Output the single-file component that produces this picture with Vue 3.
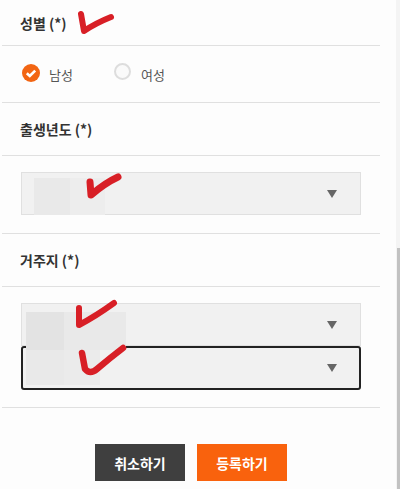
<script setup>
const marks = [
  'M81 14 L84 31 Q96 23 111 17',
  'M90 182 L91 195 Q105 183 118 177',
  'M79 308 L79 325 Q96 316 114 303',
  'M82 353 L85 369 Q90 375 97 369 Q110 358 123 348',
]
const widths = [6, 7, 6, 6.5]
</script>

<template>
  <div class="page">
    <main class="form">
      <section class="head"><h2>성별 (*)</h2></section>
      <section class="radios">
        <label class="radio">
          <svg class="on" width="18" height="18" viewBox="0 0 18 18">
            <circle cx="9" cy="9" r="9" fill="#f26513" />
            <path d="M4.8 9.2 L7.8 12 L13.2 6.6" fill="none" stroke="#fff" stroke-width="2.6" />
          </svg>
          <span>남성</span>
        </label>
        <label class="radio second">
          <span class="off"></span>
          <span>여성</span>
        </label>
      </section>
      <section class="head"><h2>출생년도 (*)</h2></section>
      <section class="fields single">
        <div class="select"><i></i></div>
      </section>
      <section class="head"><h2>거주지 (*)</h2></section>
      <section class="fields double">
        <div class="select"><i></i></div>
        <div class="select focus"><i></i></div>
      </section>
      <footer class="actions">
        <button class="cancel" type="button">취소하기</button>
        <button class="submit" type="button">등록하기</button>
      </footer>
    </main>

    <div class="bar"></div>

    <!-- redaction patches and hand-drawn marks lie over the form -->
    <div class="patch" style="left:34px;top:178px;width:36px;height:37px;background:#e9e9e9"></div>
    <div class="patch" style="left:70px;top:178px;width:35px;height:37px;background:#ededed"></div>
    <div class="patch" style="left:26px;top:312px;width:38px;height:38px;background:#e3e3e3"></div>
    <div class="patch" style="left:64px;top:312px;width:62px;height:38px;background:#e9e9e9"></div>
    <div class="patch" style="left:26px;top:350px;width:38px;height:35px;background:#e9e9e9"></div>
    <div class="patch" style="left:64px;top:350px;width:36px;height:35px;background:#ebebeb"></div>
    <svg class="ink" width="400" height="489" viewBox="0 0 400 489">
      <path v-for="(d, i) in marks" :key="i" :d="d" :stroke-width="widths[i]" fill="none" stroke="#d81f26" stroke-linecap="round" stroke-linejoin="round" />
    </svg>
  </div>
</template>

<style>
html, body { margin: 0; background: #fdfdfd; }
</style>

<style scoped>
.page {
  position: relative;
  width: 400px;
  height: 489px;
  overflow: hidden;
  background: #fdfdfd;
  font-family: "Noto Sans CJK KR", "Noto Sans", sans-serif;
}
.form {
  width: 378px;
  margin-left: 2px;
  display: flex;
  flex-direction: column;
}
section { border-bottom: 1.5px solid #e0e0e0; box-sizing: border-box; }
.head {
  display: flex;
  align-items: center;
  padding-left: 18px;
}
.head h2 {
  margin: 0;
  font-size: 14px;
  font-weight: 700;
  color: #333;
  line-height: 18px;
}
.head:nth-of-type(1) { height: 46px; }
.head:nth-of-type(3) { height: 53px; }
.head:nth-of-type(5) { height: 53px; }
.radios {
  height: 57px;
  display: flex;
  align-items: center;
  padding-left: 20px;
  padding-bottom: 2px;
}
.radio {
  display: flex;
  align-items: center;
  gap: 9px;
  font-size: 13px;
  color: #555;
}
.radio span:last-child { padding-top: 3px; }
.second { margin-left: 41px; gap: 10px; }
.off {
  width: 13px;
  height: 13px;
  border: 2px solid #ddd;
  border-radius: 50%;
  background: #fafafa;
  margin-top: -3px;
}
.fields {
  padding-left: 19px;
  display: flex;
  flex-direction: column;
}
.single { height: 78px; padding-top: 16px; }
.double { height: 121px; padding-top: 16px; }
.select {
  width: 340px;
  height: 43px;
  box-sizing: border-box;
  flex: none;
  background: #f1f1f1;
  border: 1px solid #e0e0e0;
  display: flex;
  align-items: center;
  justify-content: flex-end;
  padding-right: 23px;
}
.select i {
  width: 0;
  height: 0;
  border-left: 5px solid transparent;
  border-right: 5px solid transparent;
  border-top: 8px solid #666;
}
.focus {
  height: 44px;
  border: 2px solid #222;
  border-radius: 3px;
  padding-right: 22px;
}
.actions {
  display: flex;
  justify-content: center;
  gap: 12px;
  padding-top: 36px;
  margin-left: -2px;
  width: 382px;
}
.actions button {
  width: 90px;
  height: 37px;
  border: 0;
  padding: 0;
  color: #fff;
  font: 700 14px "Noto Sans CJK KR", "Noto Sans", sans-serif;
}
.cancel { background: #3f3f3f; }
.submit { background: #f9620d; }
.bar {
  position: absolute;
  top: 0;
  right: 0;
  width: 4px;
  height: 489px;
  background: #f4f4f4;
}
.bar::after {
  content: "";
  position: absolute;
  top: 248px;
  left: 1px;
  right: 0;
  bottom: 0;
  background: #c2c2c2;
}
.patch { position: absolute; }
.ink { position: absolute; top: 0; left: 0; pointer-events: none; }
</style>
